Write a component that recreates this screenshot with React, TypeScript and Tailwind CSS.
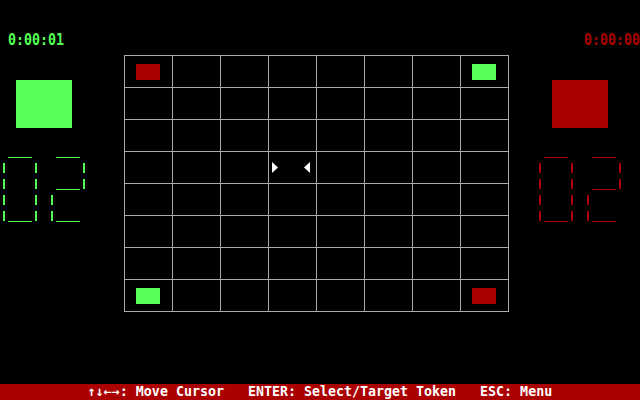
import React from "react";

const GREEN = "#55ff55";
const RED = "#aa0000";

function Digits({ color }: { color: string }) {
  const rows = [23, 39, 55, 71];
  return (
    <svg width="96" height="84" viewBox="0 0 96 84" className="block">
      <g fill={color}>
        {/* 0 */}
        <rect x="8" y="17" width="24" height="1" />
        {rows.map((y) => (
          <rect key={"l" + y} x="3" y={y} width="2" height="10" />
        ))}
        {rows.map((y) => (
          <rect key={"r" + y} x="35" y={y} width="2" height="10" />
        ))}
        <rect x="8" y="81" width="24" height="1" />
        {/* 2 */}
        <rect x="56" y="17" width="24" height="1" />
        <rect x="83" y="23" width="2" height="10" />
        <rect x="83" y="39" width="2" height="10" />
        <rect x="56" y="49" width="24" height="1" />
        <rect x="51" y="55" width="2" height="10" />
        <rect x="51" y="71" width="2" height="10" />
        <rect x="56" y="81" width="24" height="1" />
      </g>
    </svg>
  );
}

function Cursor() {
  return (
    <svg width="47" height="31" viewBox="0 0 47 31" className="block">
      <polygon points="3,10 9,15.5 3,21" fill="#ffffff" />
      <polygon points="41,10 35,15.5 41,21" fill="#ffffff" />
    </svg>
  );
}

export default function App() {
  const cells = [];
  for (let r = 0; r < 8; r++) {
    for (let c = 0; c < 8; c++) {
      let token: string | null = null;
      if (r === 0 && c === 0) token = "red";
      if (r === 0 && c === 7) token = "green";
      if (r === 7 && c === 0) token = "green";
      if (r === 7 && c === 7) token = "red";
      const cursor = r === 3 && c === 3;
      cells.push(
        <div key={r * 8 + c} className="bg-black w-[47px] h-[31px]">
          {token === "red" && <div className="ml-[11px] mt-[8px] w-[24px] h-[16px] bg-[#aa0000]" />}
          {token === "green" && <div className="ml-[11px] mt-[8px] w-[24px] h-[16px] bg-[#55ff55]" />}
          {cursor && <Cursor />}
        </div>
      );
    }
  }

  return (
    <div className="w-[640px] h-[400px] bg-black flex flex-col overflow-hidden font-['DejaVu_Sans_Mono',monospace] font-bold">
      <div className="flex-1 flex">
        {/* left panel */}
        <div className="w-[124px] pt-[32px]">
          <div className="pl-2 h-4 leading-4 text-[13.3px] text-[#55ff55] scale-y-125 whitespace-pre">0:00:01</div>
          <div className="ml-4 mt-[32px] w-[56px] h-[48px] bg-[#55ff55]" />
          <div className="mt-[12px]">
            <Digits color={GREEN} />
          </div>
        </div>
        {/* board */}
        <div className="pt-[55px]">
          <div className="grid grid-cols-[repeat(8,47px)] grid-rows-[repeat(8,31px)] gap-px p-px bg-[#aaaaaa]">
            {cells}
          </div>
        </div>
        {/* right panel */}
        <div className="flex-1 pt-[32px]">
          <div className="h-4 leading-4 text-[13.3px] text-[#aa0000] text-right scale-y-125 whitespace-pre">0:00:00</div>
          <div className="ml-[43px] mt-[32px] w-[56px] h-[48px] bg-[#aa0000]" />
          <div className="mt-[12px] ml-[27px]">
            <Digits color={RED} />
          </div>
        </div>
      </div>
      <div className="h-4 bg-[#aa0000] text-white text-center leading-4 text-[13.3px] whitespace-pre">
        ↑↓←→: Move Cursor   ENTER: Select/Target Token   ESC: Menu
      </div>
    </div>
  );
}
